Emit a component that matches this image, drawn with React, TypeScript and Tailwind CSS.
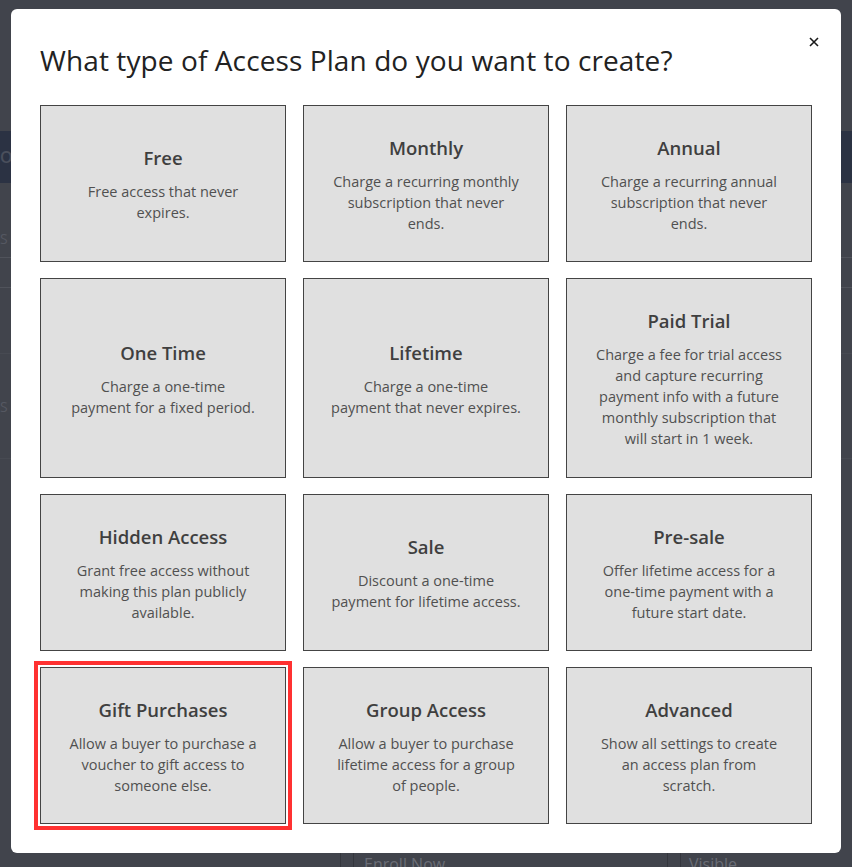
import React from "react";

type Plan = { title: string; lines: string[]; highlight?: boolean };

const plans: Plan[] = [
  { title: "Free", lines: ["Free access that never", "expires."] },
  { title: "Monthly", lines: ["Charge a recurring monthly", "subscription that never", "ends."] },
  { title: "Annual", lines: ["Charge a recurring annual", "subscription that never", "ends."] },
  { title: "One Time", lines: ["Charge a one-time", "payment for a fixed period."] },
  { title: "Lifetime", lines: ["Charge a one-time", "payment that never expires."] },
  {
    title: "Paid Trial",
    lines: [
      "Charge a fee for trial access",
      "and capture recurring",
      "payment info with a future",
      "monthly subscription that",
      "will start in 1 week.",
    ],
  },
  { title: "Hidden Access", lines: ["Grant free access without", "making this plan publicly", "available."] },
  { title: "Sale", lines: ["Discount a one-time", "payment for lifetime access."] },
  { title: "Pre-sale", lines: ["Offer lifetime access for a", "one-time payment with a", "future start date."] },
  {
    title: "Gift Purchases",
    lines: ["Allow a buyer to purchase a", "voucher to gift access to", "someone else."],
    highlight: true,
  },
  { title: "Group Access", lines: ["Allow a buyer to purchase", "lifetime access for a group", "of people."] },
  { title: "Advanced", lines: ["Show all settings to create", "an access plan from", "scratch."] },
];

function PlanCard({ plan }: { plan: Plan }) {
  return (
    <button
      className={
        "flex flex-col items-center justify-center bg-[#e0e0e0] border border-[#444] text-center px-3 " +
        (plan.highlight ? "outline-4 outline-offset-2 outline-[#ff3131]" : "")
      }
    >
      <span className="text-[18.5px] leading-[28px] font-semibold text-[#3f3f3f]">{plan.title}</span>
      <span className="mt-[9px] text-[14.5px] leading-[21px] text-[#505050]">
        {plan.lines.map((l) => (
          <span key={l} className="block whitespace-nowrap">
            {l}
          </span>
        ))}
      </span>
    </button>
  );
}

export default function App() {
  return (
    <div className="relative w-[852px] h-[867px] overflow-hidden bg-[#41444c] font-['Open_Sans',sans-serif]">
      {/* page behind the overlay */}
      <div className="flex flex-col">
        <div className="h-[131px]" />
        <div className="h-[52px] bg-[#2b3243] flex items-center">
          <span className="text-[16px] text-[#4a4f5c] font-semibold">O</span>
        </div>
        <div className="h-[75px] border-b border-[#50535b] flex items-end pb-2">
          <span className="text-[14px] text-[#555862]">S</span>
        </div>
        <div className="h-[30px] border-b border-[#50535b]" />
        <div className="h-[66px] border-b border-[#474a52]" />
        <div className="h-[105px] border-b border-[#474a52] flex items-center">
          <span className="text-[14px] text-[#555862]">S</span>
        </div>
      </div>
      <div className="absolute left-0 top-[853px] w-full h-[14px] flex">
        <div className="w-[341px] border-r border-[#34363d]" />
        <div className="w-[12px]" />
        <div className="w-[315px] border-l border-r border-[#34363d] pl-[10px] pt-[3px] text-[16px] leading-[16px] text-[#6a6d76]">
          Enroll Now
        </div>
        <div className="w-[12px]" />
        <div className="flex-1 border-l border-[#34363d] pl-[8px] pt-[3px] text-[16px] leading-[16px] text-[#6a6d76]">
          Visible
        </div>
      </div>

      {/* modal */}
      <div className="absolute left-[11px] top-[9px] w-[830px] h-[844px] bg-white rounded-[6px] px-[29px] pt-[32px]">
        <button className="absolute right-[20px] top-[26px] p-[2px]" aria-label="Close">
          <svg width="10" height="10" viewBox="0 0 10 10">
            <path d="M1 1L9 9M9 1L1 9" stroke="#1a1a1a" strokeWidth="1.6" fill="none" />
          </svg>
        </button>
        <h2 className="text-[28px] leading-[38px] text-[#222] tracking-[0.1px]">
          What type of Access Plan do you want to create?
        </h2>
        <div className="mt-[26px] grid grid-cols-3 gap-x-[17px] gap-y-[16px] grid-rows-[157px_200px_157px_157px]">
          {plans.map((p) => (
            <PlanCard key={p.title} plan={p} />
          ))}
        </div>
      </div>
    </div>
  );
}
